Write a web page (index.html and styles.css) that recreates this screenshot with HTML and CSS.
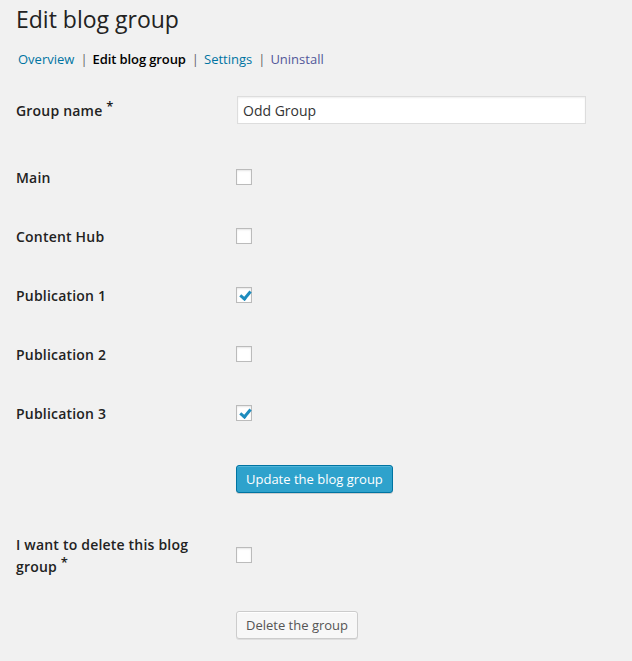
FILE: index.html
```html
<!DOCTYPE html>
<html>
<head>
<title>Edit blog group</title>
<link rel="stylesheet" href="styles.css">
</head>
<body>
<div class="wrap">
<h1>Edit blog group</h1>
<ul class="subnav">
<li><a href="#">Overview</a><span class="sep">|</span></li>
<li class="current">Edit blog group</li>
<li><span class="sep">|</span><a href="#">Settings</a><span class="sep">|</span></li>
<li><a href="#" class="visited">Uninstall</a></li>
</ul>
<form>
<table class="form-table">
<tr class="text-row">
<th><label for="groupName">Group name <sup>*</sup></label></th>
<td><input type="text" id="groupName" class="regular-text" value="Odd Group"></td>
</tr>
<tr>
<th><label for="blog1">Main</label></th>
<td><input type="checkbox" id="blog1"></td>
</tr>
<tr>
<th><label for="blog2">Content Hub</label></th>
<td><input type="checkbox" id="blog2"></td>
</tr>
<tr>
<th><label for="blog3">Publication 1</label></th>
<td><input type="checkbox" id="blog3" checked></td>
</tr>
<tr>
<th><label for="blog4">Publication 2</label></th>
<td><input type="checkbox" id="blog4"></td>
</tr>
<tr>
<th><label for="blog5">Publication 3</label></th>
<td><input type="checkbox" id="blog5" checked></td>
</tr>
<tr class="submit-row">
<th></th>
<td><button type="button" class="button button-primary">Update the blog group</button></td>
</tr>
<tr class="delete-row">
<th><label for="confirmDelete">I want to delete this blog group <sup>*</sup></label></th>
<td><input type="checkbox" id="confirmDelete"></td>
</tr>
<tr class="delete-submit">
<th></th>
<td><button type="button" class="button">Delete the group</button></td>
</tr>
</table>
</form>
</div>
</body>
</html>
```

FILE: styles.css
```css
body {
font-family: "Open Sans", sans-serif;
font-size: 13px;
color: #222;
background-color: #f1f1f1;
margin: 0;
}
.wrap {
padding-left: 16px;
}
h1 {
margin: 0;
padding-top: 5px;
font-size: 23px;
font-weight: 400;
line-height: 29px;
color: #222;
}
.subnav {
list-style: none;
margin: 12px 0 0 2px;
padding: 0;
display: flex;
font-size: 13px;
line-height: 26px;
color: #666;
}
.subnav a {
color: #0074a2;
text-decoration: none;
}
.subnav a.visited {
color: #52589a;
}
.subnav .current {
color: #000;
font-weight: 600;
letter-spacing: -0.1px;
}
.subnav .sep {
margin: 0 5px 0 6px;
}
.form-table {
border-collapse: collapse;
margin-top: 9px;
}
.form-table th {
width: 200px;
padding: 20px 10px 17px 0;
text-align: left;
vertical-align: top;
font-size: 14px;
font-weight: 600;
line-height: 22px;
letter-spacing: 0.2px;
color: #222;
}
.form-table td {
padding: 15px 10px;
vertical-align: middle;
}
.form-table sup {
line-height: 0;
font-size: 13px;
vertical-align: 5px;
}
.text-row th {
padding-top: 19px;
padding-bottom: 25px;
}
.text-row td {
vertical-align: top;
}
.regular-text {
box-sizing: border-box;
width: 349px;
height: 28px;
margin: 0 1px;
padding: 3px 5px;
border: 1px solid #ddd;
background: #fff;
box-shadow: inset 0 1px 2px rgba(0, 0, 0, .07);
font-family: inherit;
font-size: 14px;
color: #333;
outline: none;
}
input[type="checkbox"] {
-webkit-appearance: none;
appearance: none;
display: block;
position: relative;
width: 16px;
height: 16px;
margin: 0;
border: 1px solid #bbb;
background: #fff;
box-shadow: inset 0 1px 2px rgba(0, 0, 0, .1);
box-sizing: border-box;
}
/* tick drawn as a rotated corner */
input[type="checkbox"]:checked::before {
content: "";
position: absolute;
left: 5px;
top: 1px;
width: 4px;
height: 8px;
border-right: 3px solid #1e8cbe;
border-bottom: 3px solid #1e8cbe;
transform: rotate(40deg);
}
.submit-row td {
padding: 23px 10px 22px;
}
.delete-row th {
padding-top: 19px;
padding-bottom: 16px;
}
.delete-submit td {
padding: 17px 10px 15px;
}
.button {
height: 28px;
padding: 0 9px 1px;
border: 1px solid #ccc;
border-radius: 3px;
background: #f7f7f7;
color: #555;
font-family: inherit;
font-size: 13px;
line-height: 26px;
box-shadow: inset 0 1px 0 #fff, 0 1px 0 rgba(0, 0, 0, .08);
cursor: pointer;
}
.button-primary {
background: #2ea2cc;
border-color: #0074a2;
color: #fff;
box-shadow: inset 0 1px 0 rgba(120, 200, 230, .5), 0 1px 0 rgba(0, 0, 0, .15);
}
```
